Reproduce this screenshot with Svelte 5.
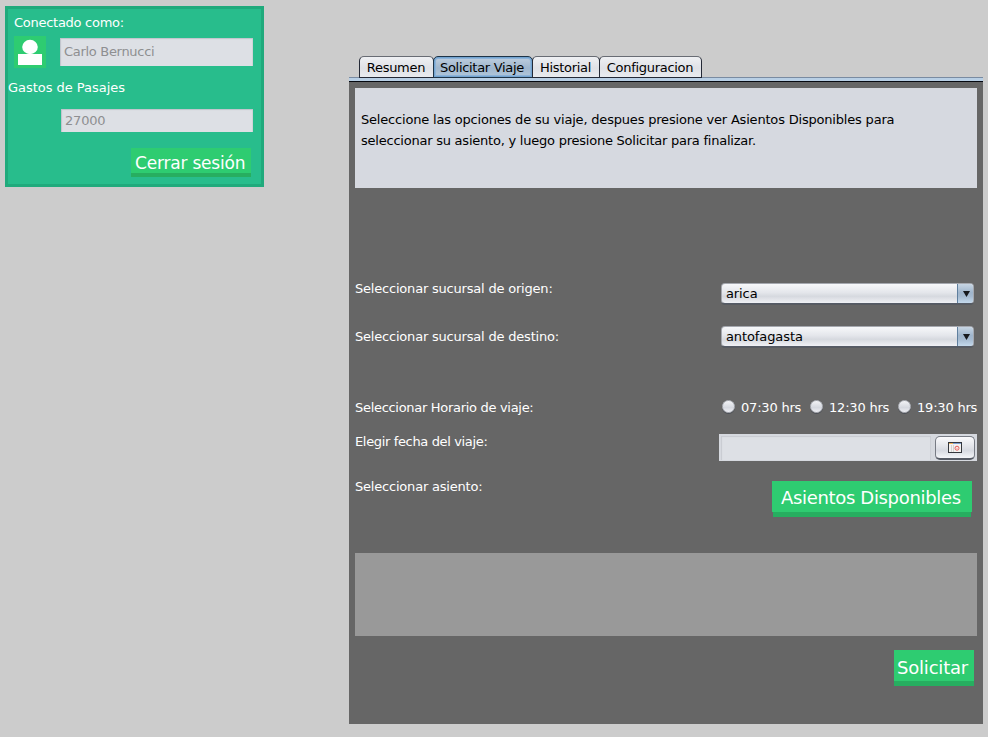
<script>
  const tabs = [
    { name: 'Resumen', width: 75 },
    { name: 'Solicitar Viaje', width: 100 },
    { name: 'Historial', width: 68 },
    { name: 'Configuracion', width: 103 }
  ];
  let active = $state('Solicitar Viaje');
  const hours = ['07:30 hrs', '12:30 hrs', '19:30 hrs'];
  let hour = $state('');
</script>

{#snippet combo(value)}
  <button class="combo">
    <span>{value}</span>
    <i><svg width="7" height="6" viewBox="0 0 7 6"><path d="M0 0H7L3.5 6Z" fill="#17191d" /></svg></i>
  </button>
{/snippet}

<div class="window">
  <aside>
    <div class="connected">Conectado como:</div>
    <div class="user">
      <svg width="32" height="32" viewBox="0 0 32 32">
        <rect width="32" height="32" fill="#2ecc71" />
        <rect x="4" y="18" width="24" height="11" fill="#fff" />
        <ellipse cx="16" cy="11" rx="7.8" ry="7.2" fill="#fff" />
      </svg>
      <div class="field name">Carlo Bernucci</div>
    </div>
    <div class="spent">Gastos de Pasajes</div>
    <div class="field amount">27000</div>
    <button class="green logout">Cerrar sesión</button>
  </aside>

  <main>
    <nav>
      {#each tabs as tab}
        <button class="tab" class:active={active === tab.name} style:width="{tab.width}px" onclick={() => (active = tab.name)}><span>{tab.name}</span></button>
      {/each}
    </nav>
    <div class="strip"></div>
    <section>
      <div class="message">
        <div class="m1">Seleccione las opciones de su viaje, despues presione ver Asientos Disponibles para</div>
        <div class="m2">seleccionar su asiento, y luego presione Solicitar para finalizar.</div>
      </div>
      <div class="row origin"><span>Seleccionar sucursal de origen:</span>{@render combo('arica')}</div>
      <div class="row target"><span>Seleccionar sucursal de destino:</span>{@render combo('antofagasta')}</div>
      <div class="row time">
        <span>Seleccionar Horario de viaje:</span>
        <div class="hours">
          {#each hours as h}
            <button class="radio" onclick={() => (hour = h)}><i class:on={hour === h}></i>{h}</button>
          {/each}
        </div>
      </div>
      <div class="row date">
        <span>Elegir fecha del viaje:</span>
        <div class="picker">
          <div class="datefield"></div>
          <button class="calendar" aria-label="Calendario">
            <svg width="14" height="11" viewBox="0 0 14 11">
              <rect x="0.5" y="0.5" width="13" height="10" fill="#f4f2f0" stroke="#35383d" />
              <path d="M1 1.5H5" stroke="#eeb45c" />
              <path d="M5 1.5H13" stroke="#7d9fd0" />
              <path d="M3.5 3V10M5.5 3V10" stroke="#d5d3d2" />
              <circle cx="9" cy="6.2" r="2" fill="#fff" stroke="#e35a55" />
              <rect x="8.5" y="5.7" width="1" height="1" fill="#e35a55" />
            </svg>
          </button>
        </div>
      </div>
      <div class="row seat"><span>Seleccionar asiento:</span><button class="green seats">Asientos Disponibles</button></div>
      <div class="output"></div>
      <button class="green submit">Solicitar</button>
    </section>
  </main>
</div>

<style>
  :global(body) { background: #ccc; }
  .window, .window * { box-sizing: border-box; }
  .window {
    display: flex; align-items: flex-start; justify-content: space-between;
    width: 988px; height: 737px; padding: 6px 5px 0; overflow: hidden;
    background: #ccc; color: #fff; font: 13px/15px "DejaVu Sans", sans-serif; white-space: nowrap;
    letter-spacing: -0.2px;
  }
  button { font: inherit; letter-spacing: inherit; color: inherit; border: 0; padding: 0; margin: 0; background: none; white-space: nowrap; }
  svg { display: block; }
  aside {
    display: flex; flex-direction: column; width: 259px; height: 181px;
    border: 3px solid #20aa7c; background: #28bd8c;
  }
  .connected { margin: 6px 0 0 6px; letter-spacing: -0.27px; }
  .user { display: flex; gap: 14px; margin: 6px 0 0 6px; }
  .field {
    background: #dde0e5; color: #8e8f91; padding-left: 4px;
    box-shadow: inset 1px 1px 1px #bfc4cb, inset -1px 0 #cfd3d8;
  }
  .name { width: 193px; height: 28px; margin-top: 2px; line-height: 27px; letter-spacing: -0.3px; }
  .spent { margin-top: 12px; letter-spacing: -0.03px; }
  .amount { width: 192px; height: 23px; line-height: 23px; margin: 14px 0 0 53px; }
  .green { display: block; color: #fff; text-align: left; background: #2ecc71; border-bottom: 5px solid #27ae60; }
  .logout { width: 120px; height: 29px; margin: 16px 0 0 123px; padding: 3px 0 0 4px; border-bottom-width: 4px; font-size: 17px; line-height: 25px; letter-spacing: -0.2px; }

  main { width: 634px; margin-top: 50px; }
  nav { display: flex; height: 21px; padding-left: 10px; }
  .tab {
    height: 22px; margin-right: -1px; color: #000; line-height: 21px; position: relative; letter-spacing: -0.3px; padding-right: 1px;
    border: 1px solid #242936; border-top: 1px solid #686c74; border-radius: 5px 5px 0 0;
    background: linear-gradient(#eff0f3, #dfe1e6 55%, #e9ebef);
  }
  .tab.active {
    border-color: #1e3448; background: linear-gradient(#c0cfdf, #9fb6cd 55%, #b2c8dc);
    box-shadow: inset 0 0 0 1px #73a4d1, inset 0 0 0 2px #8db3d8; padding-right: 2px;
  }
  .strip { height: 5px; border-top: 1px solid #7a8ba1; border-bottom: 1px solid #05080f; background: #b8cfe5; }
  section { height: 642px; padding: 6px 6px 0; background: #666; }
  .message { height: 100px; background: #d6d9e0; color: #000; padding: 21px 6px 0; line-height: 21px; }
  .m1 { letter-spacing: -0.19px; }
  .m2 { letter-spacing: -0.23px; }
  .row { display: flex; justify-content: space-between; align-items: flex-start; }
  .origin { height: 48px; margin-top: 93px; }
  .target { height: 71px; }
  .time { height: 34px; }
  .time > span { letter-spacing: -0.3px; }
  .date { height: 45px; }
  .date > span { letter-spacing: -0.35px; }
  .seat { height: 74px; }
  .combo {
    display: flex; justify-content: space-between; width: 253px; height: 21px; margin: 2px 3px 0 0;
    padding-left: 5px; color: #000; line-height: 21px; border-radius: 4px; overflow: hidden; letter-spacing: -0.1px;
    background: linear-gradient(#f7f8fa, #e4e6eb 45%, #d6d9df 65%, #f0f1f5); border: 1px solid #a5a8af; border-bottom-color: #555b66;
    box-shadow: 0 1px #585b61;
  }
  .combo span { line-height: 20px; padding: 0; margin-left: -1px; }
  .combo i { display: flex; width: 16px; height: 19px; align-items: center; justify-content: center; padding-left: 1px; border-left: 1px solid #5f7f9e; background: linear-gradient(#c7d5e3, #9fb5cc 45%, #a5bad0 65%, #c4d9ec); }
  .target .combo { margin-top: -3px; }
  .hours { display: flex; gap: 8px; }
  .radio { display: flex; width: 80px; gap: 6px; align-items: center; height: 15px; padding-left: 1px; }
  .radio i { flex: none; width: 13px; height: 13px; margin-top: -2px; border-radius: 50%; background: linear-gradient(#f2f3f6, #d5d8df 60%, #eff0f4); border: 1px solid #b0b3ba; box-shadow: 0 1px #4d5057; }
  .radio i.on { background: radial-gradient(#222 30%, #a5bad0 35%); }
  .picker { display: flex; width: 258px; height: 27px; background: #d6d9df; padding: 2px; justify-content: space-between; }
  .datefield { width: 210px; height: 24px; background: #dde0e5; box-shadow: inset 1px 1px 1px #c8cbd1, inset -1px 0 #cdd0d6; }
  .calendar { width: 40px; height: 24px; display: flex; align-items: center; justify-content: center; border: 1px solid #777b84; border-bottom: 2px solid #555a64; border-radius: 5px; background: linear-gradient(#fafafc, #e3e5ea 45%, #d7dae1 65%, #f4f5f8); }
  .seats, .submit { height: 36px; border: 0; font-size: 18px; line-height: 33px; padding-bottom: 3px; }
  .seats {
    width: 200px; margin: 2px 5px 0 0; padding-left: 9px; letter-spacing: -0.33px;
    background: linear-gradient(#2ecc71, #2ecc71) top / 100% 31px no-repeat, linear-gradient(#27ae60, #27ae60) bottom / 198px 5px no-repeat;
  }
  .output { height: 83px; background: #999; }
  .submit {
    width: 80px; margin: 14px 3px 0 auto; padding: 1px 0 2px 3px; letter-spacing: -0.2px;
    background: linear-gradient(#2ecc71 31px, #27ae60 31px);
  }
</style>
